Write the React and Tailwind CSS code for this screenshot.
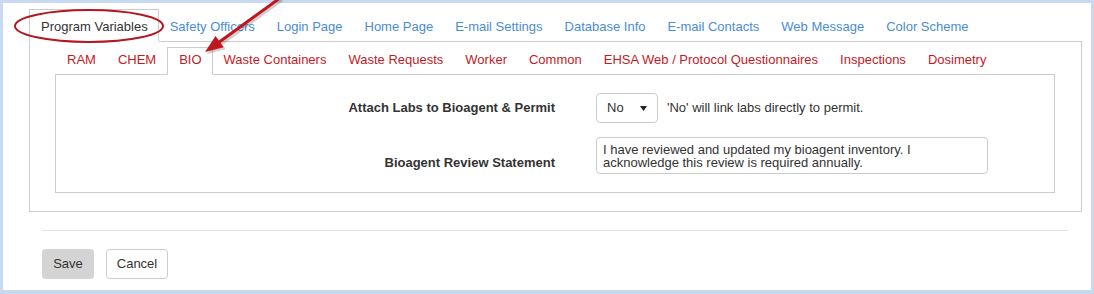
import React from "react";

const topTabs = [
  "Program Variables",
  "Safety Officers",
  "Login Page",
  "Home Page",
  "E-mail Settings",
  "Database Info",
  "E-mail Contacts",
  "Web Message",
  "Color Scheme",
];

const subTabs = [
  "RAM",
  "CHEM",
  "BIO",
  "Waste Containers",
  "Waste Requests",
  "Worker",
  "Common",
  "EHSA Web / Protocol Questionnaires",
  "Inspections",
  "Dosimetry",
];

function Annotations() {
  return (
    <svg
      className="absolute inset-0 z-20 pointer-events-none"
      width="1094"
      height="294"
      viewBox="0 0 1094 294"
    >
      <g opacity="0.18" transform="translate(2,2)">
        <line x1="280" y1="-2" x2="218" y2="43" stroke="#000" strokeWidth="3" />
        <polygon points="205,52 215.5,35.9 223.7,47.3" fill="#000" />
      </g>
      <ellipse cx="89" cy="26" rx="74" ry="16" fill="none" stroke="#b3171f" strokeWidth="2" />
      <line x1="280" y1="-2" x2="218" y2="43" stroke="#c0161e" strokeWidth="3" />
      <polygon points="205,52 215.5,35.9 223.7,47.3" fill="#c0161e" />
    </svg>
  );
}

export default function App() {
  return (
    <div
      className="relative w-[1094px] h-[294px] bg-[#c6d9f1] pt-[3px] pl-[3px] pr-[3px] pb-[4px] text-[13px] text-[#333]"
      style={{ fontFamily: '"Liberation Sans", Arial, sans-serif' }}
    >
      <div className="bg-white h-full pt-[6px]">
        <div className="ml-[26px] mr-[9px]">
          {/* top level tabs */}
          <div className="flex items-end">
            {topTabs.map((t, i) =>
              i === 0 ? (
                <div
                  key={t}
                  className="relative z-10 -mb-px h-[33px] pl-[11px] pr-[10px] pt-[2px] flex items-center bg-white border border-[#ccc] border-b-white text-[#333]"
                >
                  {t}
                </div>
              ) : (
                <div
                  key={t}
                  className="h-[32px] px-[10px] pt-[3px] flex items-center border border-transparent border-b-0 text-[#4a8cd6]"
                >
                  {t}
                </div>
              )
            )}
          </div>

          <div className="border border-[#ccc] pl-[25px] pr-[26px] pt-[5px] pb-[18px]">
            {/* program tabs */}
            <div className="flex items-end pl-[1px]">
              {subTabs.map((t) =>
                t === "BIO" ? (
                  <div
                    key={t}
                    className="relative z-10 -mb-px h-[28px] pl-[11px] pr-[10px] pb-[3px] flex items-center bg-white border border-[#ccc] border-b-white text-[#c41a1f]"
                  >
                    {t}
                  </div>
                ) : (
                  <div
                    key={t}
                    className="h-[27px] px-[10px] pb-[2px] flex items-center border border-transparent border-b-0 text-[#c41a1f]"
                  >
                    {t}
                  </div>
                )
              )}
            </div>

            <div className="border border-[#ccc] pt-[18px] pb-[18px]">
              <div className="flex items-center h-[30px]">
                <div className="w-[499px] text-right font-bold">Attach Labs to Bioagent &amp; Permit</div>
                <div className="ml-[41px] w-[62px] h-[30px] border border-[#ccc] rounded-[4px] flex items-center justify-between pl-[10px] pr-[10px]">
                  <span>No</span>
                  <svg width="7" height="5" viewBox="0 0 7 5">
                    <polygon points="0,0 7,0 3.5,5" fill="#222" />
                  </svg>
                </div>
                <span className="ml-[9px]">'No' will link labs directly to permit.</span>
              </div>

              <div className="flex items-start mt-[14px]">
                <div className="w-[499px] text-right font-bold mt-[16px]">Bioagent Review Statement</div>
                <div className="ml-[41px] w-[392px] h-[37px] border border-[#ccc] rounded-[4px] pl-[6px] pt-[5px] leading-[13px]">
                  I have reviewed and updated my bioagent inventory. I
                  <br />
                  acknowledge this review is required annually.
                </div>
              </div>
            </div>
          </div>
        </div>

        <div className="ml-[39px] mr-[23px] mt-[18px] border-t border-[#e5e5e5]"></div>

        <div className="ml-[39px] mt-[18px] flex gap-[12px]">
          <button className="w-[52px] h-[30px] rounded-[4px] bg-[#d4d4d4] text-[#333]">Save</button>
          <button className="w-[62px] h-[30px] rounded-[4px] bg-white border border-[#ccc] text-[#333]">
            Cancel
          </button>
        </div>
      </div>
      <Annotations />
    </div>
  );
}
